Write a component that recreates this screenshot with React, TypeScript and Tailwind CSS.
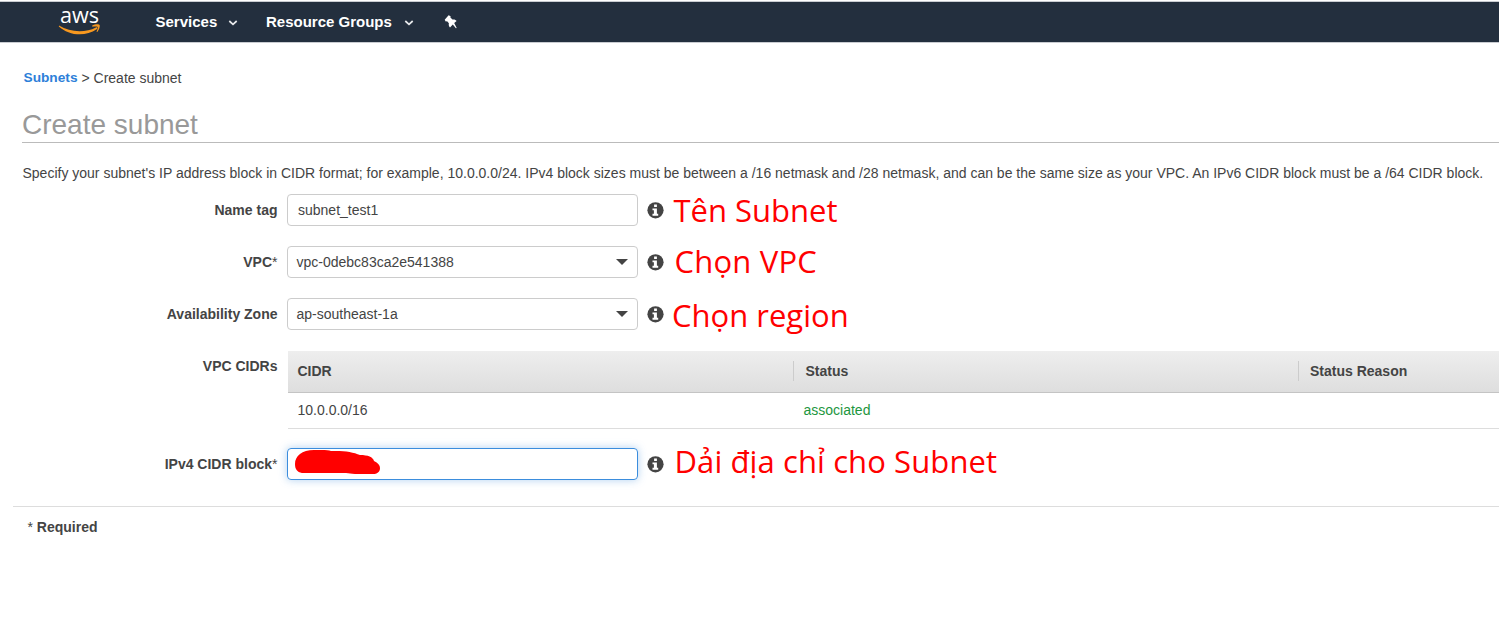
import React from "react";

function Chevron() {
  return (
    <svg width="10" height="6" viewBox="0 0 10 6" fill="none" stroke="#e8eaec" strokeWidth="1.7">
      <path d="M1.300 1 5 4.300 8.700 1" />
    </svg>
  );
}

function Logo() {
  return (
    <div className="relative h-[30px] w-[44px]">
      <span className="absolute -top-[6px] left-[1.500px] origin-left scale-x-[1.03] font-['Open_Sans',sans-serif] text-[21px] leading-[28px] font-medium">aws</span>
      <svg width="44" height="30" viewBox="0 0 44 30" className="absolute -top-[0.500px] left-0">
        <path d="M1 18.600 C12 25.200 27 26 38 20.400 C39.400 20 39.900 21.200 38.700 22.200 C27 30.300 10.500 28.300 .8 19.400 Z" fill="#f7981f" />
        <path d="M34 18.800 C37.500 16.800 41 17 41.700 18.100 C42.100 19.400 41.300 22.900 39.300 24.900 C38.700 25.100 38.400 24.800 38.700 24.200 C39.400 22.500 40.200 20.600 39.700 20 C39 19.300 36.500 19.500 34.500 19.700 Z" fill="#f7981f" />
      </svg>
    </div>
  );
}

function Pin() {
  return (
    <svg width="14" height="14" viewBox="0 0 14 14" fill="#fff">
      <path d="M4.600 .2 6.600 1.200 6.400 2.600 8.500 4.500 C10.200 4.100 11.900 4.700 12.600 5.900 L10.200 8 12.700 13 11.900 13.300 8.800 9.600 6 12.500 C4.800 11.300 4.500 9.700 4.900 8.300 L3.100 6.200 1.700 6.500 .7 4.800 Z" />
    </svg>
  );
}

function Info() {
  return (
    <svg width="17" height="17" viewBox="0 0 17 17" className="ml-[9px] shrink-0">
      <circle cx="8.500" cy="8.300" r="8.100" fill="#444" />
      <path d="M7.100 2.600H9.900V5H7.100Z M5.500 6.400H9.900V11.800H11.200V13.700H5.500V11.800H6.900V8.200H5.500Z" fill="#fff" />
    </svg>
  );
}

function Row({ label, star, note, children }: { label: string; star?: boolean; note: React.ReactNode; children: React.ReactNode }) {
  return (
    <div className="flex h-8 items-center">
      <div className="w-[277.500px] shrink-0 text-right font-bold">
        {label}
        {star && <span className="font-normal">*</span>}
      </div>
      <div className="ml-[9.500px] w-[350.500px] shrink-0">{children}</div>
      <Info />
      {note}
    </div>
  );
}

function Select({ value }: { value: string }) {
  return (
    <div className="flex h-8 items-center justify-between rounded-[4px] border border-[#ccc] pr-[9px] pl-[8.500px]">
      <span>{value}</span>
      <svg width="12" height="6" viewBox="0 0 12 6" fill="#444"><path d="M0 0H12L6 6Z" /></svg>
    </div>
  );
}

const noteClass = "block whitespace-nowrap font-['Open_Sans',sans-serif] text-[31px] leading-8 text-[#f00]";

export default function App() {
  return (
    <div className="h-[630px] w-[1499px] overflow-hidden bg-white font-['Liberation_Sans',sans-serif] text-[14px] leading-5 text-[#444]">
      <header className="mt-px flex h-[42px] items-center border-y border-[#c9ccd1] bg-[#232f3e] text-[15px] font-bold text-white">
        <div className="ml-[58px]"><Logo /></div>
        <span className="ml-[53.500px] w-[62px] whitespace-nowrap">Services</span>
        <div className="mt-[2px] ml-[10.500px]"><Chevron /></div>
        <span className="ml-[28px] w-[127px] whitespace-nowrap">Resource Groups</span>
        <div className="mt-[2px] ml-[11px]"><Chevron /></div>
        <div className="ml-[30px]"><Pin /></div>
      </header>

      <nav className="mt-[25px] ml-[23.500px] flex gap-1">
        <a className="text-[13.700px] font-bold text-[#2e7fd9]">Subnets</a> <span>&gt; Create subnet</span>
      </nav>
      <h1 className="mt-[20px] ml-[22px] h-[35px] border-b border-[#bbb] text-[28px] leading-[34px] text-[#999]">Create subnet</h1>
      <p className="mt-5 ml-[22.500px] whitespace-nowrap">
        Specify your subnet's IP address block in CIDR format; for example, 10.0.0.0/24. IPv4 block sizes must be between a /16 netmask and /28 netmask, and can be the same size as your VPC. An IPv6 CIDR block must be a /64 CIDR block.
      </p>

      <div className="mt-[11px] flex flex-col gap-5">
        <Row label="Name tag" note={<span className={`${noteClass} ml-[10px]`}>Tên Subnet</span>}>
          <div className="flex h-8 items-center rounded-[4px] border border-[#ccc] pl-[10px]">subnet_test1</div>
        </Row>
        <Row label="VPC" star note={<span className={`${noteClass} -mt-[2px] ml-[11px] tracking-[0.2px]`}>Chọn VPC</span>}>
          <Select value="vpc-0debc83ca2e541388" />
        </Row>
        <Row label="Availability Zone" note={<span className={`${noteClass} mt-[1px] ml-[8.500px]`}>Chọn region</span>}>
          <Select value="ap-southeast-1a" />
        </Row>
      </div>

      <div className="mt-[21px] flex">
        <div className="w-[277.500px] shrink-0 pt-[5px] text-right font-bold">VPC CIDRs</div>
        <div className="ml-[10px] flex-1">
          <div className="flex h-[42px] items-center border-b border-[#c4c4c4] bg-linear-to-b from-[#eeeeee] to-[#dedede] pb-px font-bold">
            <span className="w-[505px] pl-[10px]">CIDR</span>
            <span className="w-[505.500px] border-l border-[#ccc] pl-[12px]">Status</span>
            <span className="border-l border-[#ccc] pl-[11px]">Status Reason</span>
          </div>
          <div className="flex h-[36px] items-center border-b border-[#ddd] pb-[2px]">
            <span className="w-[516px] pl-[10px]">10.0.0.0/16</span>
            <span className="text-[#1d9640]">associated</span>
          </div>
        </div>
      </div>

      <div className="mt-[19px]">
        <Row label="IPv4 CIDR block" star note={<span className={`${noteClass} -mt-[6px] ml-[11px] tracking-[0.1px]`}>Dải địa chỉ cho Subnet</span>}>
          <div className="flex h-8 items-center rounded-[4px] border border-[#3b8ddd] pl-[7px] shadow-[0_0_8px_rgba(59,141,221,0.400)]">
            <svg width="86" height="24" viewBox="0 0 86 24" fill="#f00" className="-mt-1">
              <path d="M7 23 C2 22 0 19 0 14 C0 6 7 0 19 0 C27-.1 33 0 36 1 C49 .5 58 2 65 5 C73 5 78 7 79 11 C83 13 85 15 85 18 C85 22 82 24 78 24 H60 C56 24 54 23 51 23 Z" />
            </svg>
          </div>
        </Row>
      </div>

      <footer className="mt-[26px] ml-[13px] border-t border-[#ddd] pt-[10px] pl-[14.500px] font-bold">
        <span className="font-normal">*</span> Required
      </footer>
    </div>
  );
}
